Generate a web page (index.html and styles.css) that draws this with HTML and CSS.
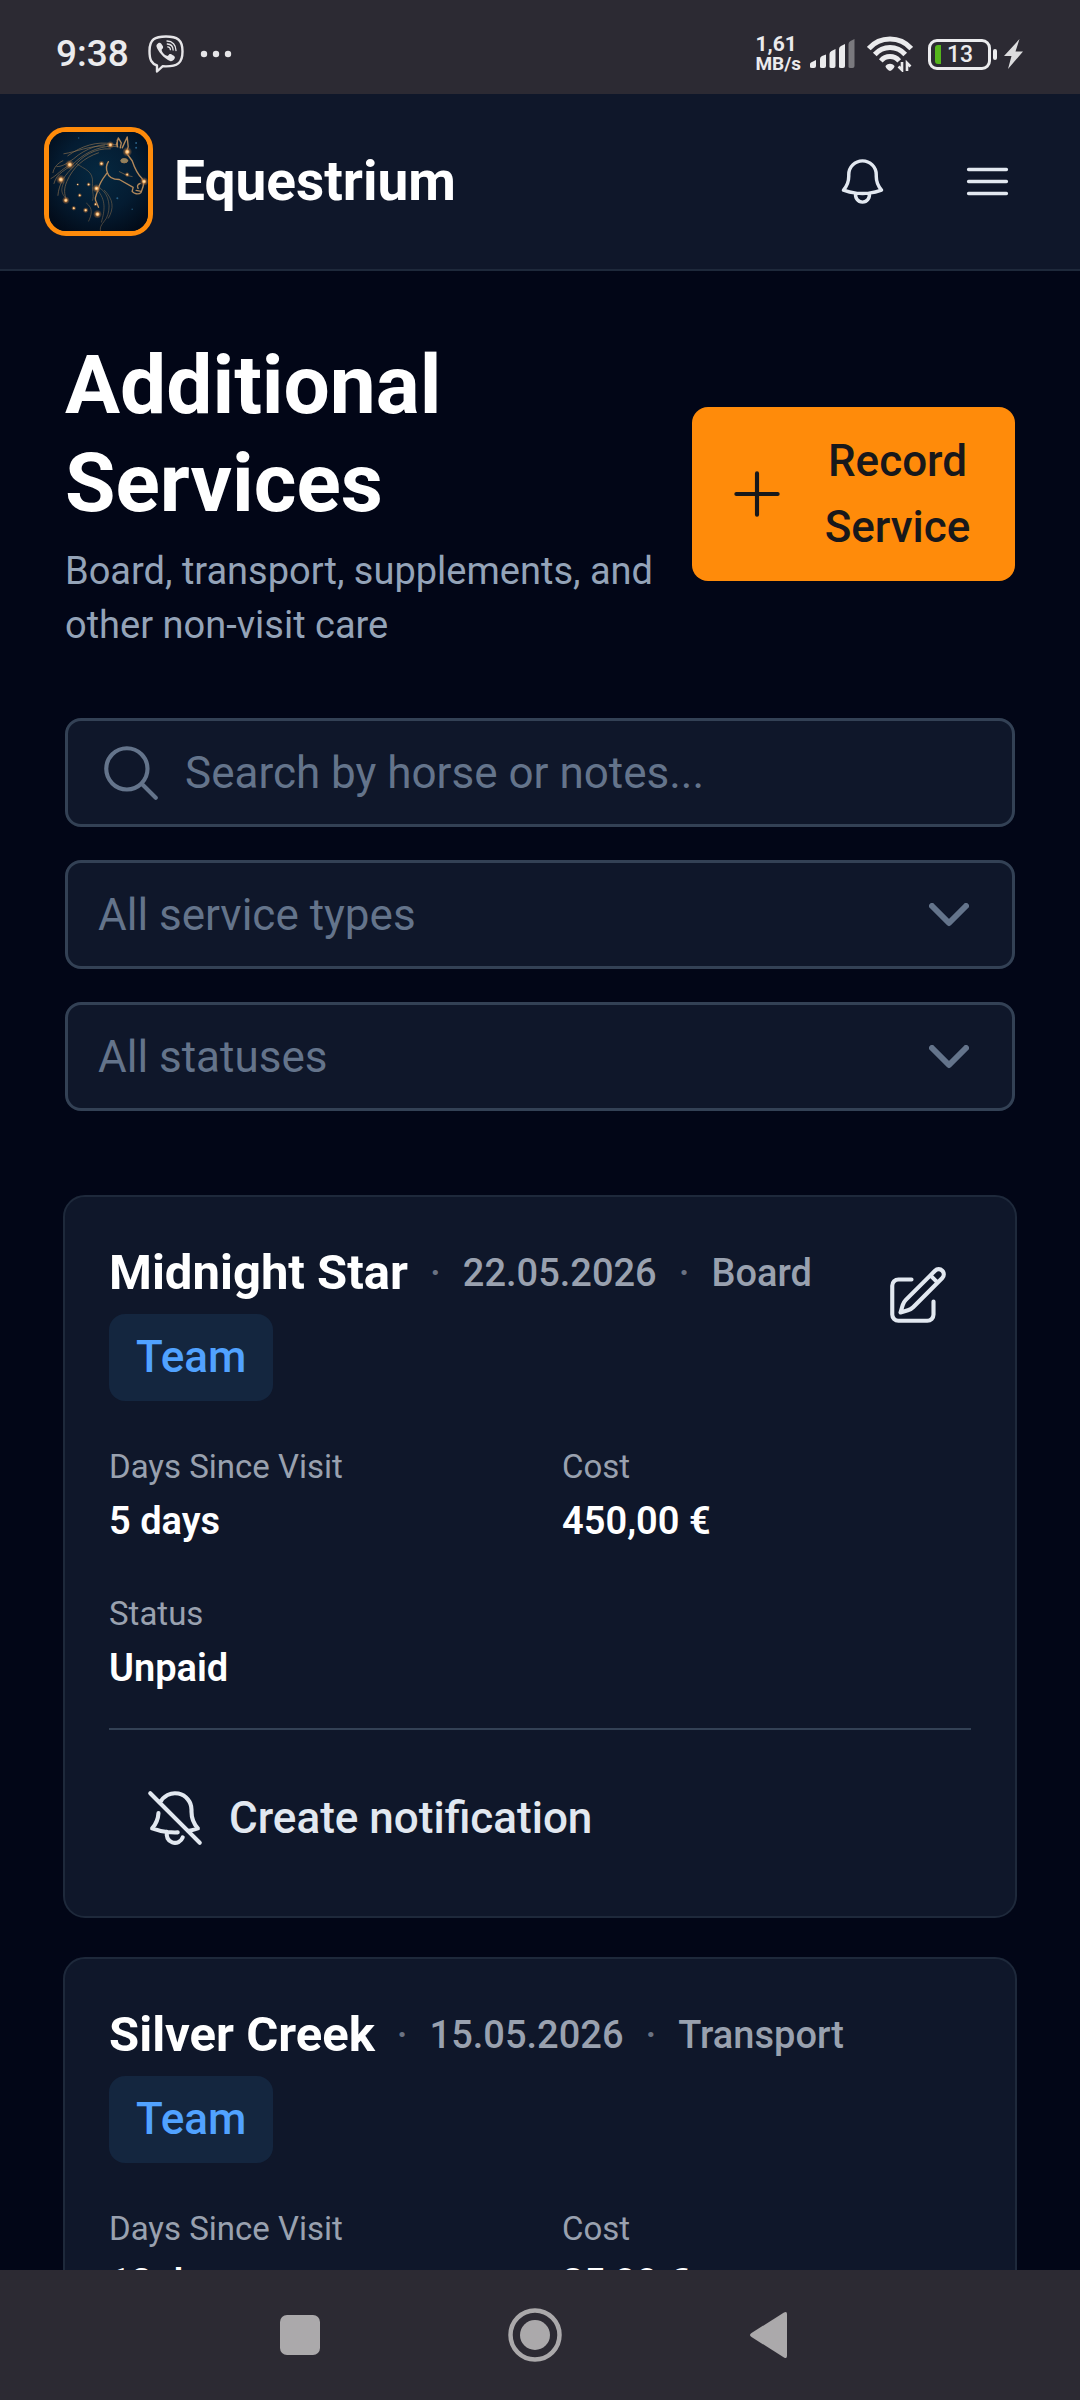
FILE: index.html
```html
<!DOCTYPE html>
<html lang="en">
<head>
<meta charset="utf-8">
<meta name="viewport" content="width=device-width, initial-scale=1">
<title>Equestrium – Additional Services</title>
<link rel="stylesheet" href="styles.css">
</head>
<body>
<div class="screen">
  <div class="status-bar">
    <div class="status-left">
      <span class="clock">9:38</span>
      <svg class="viber" width="36" height="38" viewBox="0 0 36 38" fill="none" stroke="#e6e5e8" stroke-linecap="round" stroke-linejoin="round">
        <path stroke-width="2.4" d="M18 1.500C7 1.500 1.500 4 1.500 16c0 9 2 12.500 7.500 14.500V36.500l5.500-5.200c1 .1 2 .1 3.500.1 11 0 16.500-3 16.500-15S29 1.500 18 1.500z"/>
        <path fill="#e6e5e8" stroke="none" d="M10.500 8c1.800-1.200 3.200 1.100 4.300 3 .9 1.700-.1 2.500-.9 3.200-1 1 1.500 5.300 5 6.600 1 .4 1.500-.6 2.200-1.400 1.200-1.200 5.200 1.500 5.700 2.700.6 1.700-2.300 4.600-4.200 4.100C15.500 23.500 9.500 15.500 8.500 11.500c-.4-1.500.8-2.800 2-3.500z"/>
        <path stroke-width="1.300" d="M19 6c5.500 0 9 4 9 9.500M19.300 9c3.500.2 5.700 2.500 5.800 6M19.700 11.900c1.700.1 2.600 1.100 2.700 2.800"/>
      </svg>
      <svg width="32" height="8" viewBox="0 0 32 8" fill="#e6e5e8"><circle cx="4" cy="4" r="3.200"/><circle cx="16" cy="4" r="3.200"/><circle cx="28" cy="4" r="3.200"/></svg>
    </div>
    <div class="status-right">
      <div class="net-speed"><span class="net-value">1,61</span><span class="net-unit">MB/s</span></div>
      <svg width="45" height="30" viewBox="0 0 45 30" fill="#ebebed"><path d="M0 28v-3q0-1 1-1.500l5-2.500v6q0 2-2 2H2q-2 0-2-1z"/><path d="M10 28V20q0-2 2-3l4-1.500V27q0 2-2 2h-2q-2 0-2-1z"/><path d="M19.500 28V15q0-2 2-3l4-2V27q0 2-2 2h-2q-2 0-2-1z"/><path d="M29 28V10q0-2 2-3l4-2V27q0 2-2 2h-2q-2 0-2-1z"/><path fill="#7a797e" d="M38.500 28V5q0-2 2-3l4-2V27q0 2-2 2h-2q-2 0-2-1z"/></svg>
      <svg class="wifi" width="46" height="36" viewBox="0 0 46 36" fill="none" stroke="#ebebed" stroke-width="5"><path d="M1.800 12.500C13-.2 33-.2 44.200 12.500"/><path d="M7.800 18.500c8.300-9.200 22.100-9.200 30.400 0"/><path d="M13.800 24.800c5-5.600 13.400-5.600 18.400 0"/><path fill="#ebebed" stroke="none" d="M18.500 30c2.500-3 6.500-3 9 0 0 2-3.500 5-4.500 5s-4.500-3-4.500-5z"/><path stroke-width="2.600" d="M35 26v8l-3.500-3.500M40 35v-8l3.500 3.500"/></svg>
      <div class="battery"><span class="battery-level"></span><span class="battery-text">13</span></div>
      <svg class="bolt" width="19" height="30" viewBox="0 0 19 30" fill="#dcdcde"><path d="M15.500 0 0 17h7.500L4 30 19 12.500h-7.500z"/></svg>
    </div>
  </div>

  <header class="app-header">
    <a class="brand" href="#">
      <svg class="logo" viewBox="0 0 100 100">
        <defs>
          <radialGradient id="night" cx=".5" cy=".42" r=".7"><stop offset="0" stop-color="#052840"/><stop offset=".55" stop-color="#041c32"/><stop offset="1" stop-color="#020a17"/></radialGradient>
          <radialGradient id="glow"><stop offset="0" stop-color="#fff0cd"/><stop offset=".3" stop-color="#f5b56b"/><stop offset=".55" stop-color="#b0703a" stop-opacity=".55"/><stop offset="1" stop-color="#b0703a" stop-opacity="0"/></radialGradient>
        </defs>
        <rect width="100" height="100" fill="url(#night)"/>
        <g fill="none" stroke="#9c7a52" stroke-linecap="round" stroke-linejoin="round" stroke-width="1">
          <path opacity=".6" d="M68 13C54 10 36 17 25 27c-6 4-11 8-17 8M70 15C55 12 38 20 28 29 18 39 8 40 5 52M64 12C48 9 33 14 19 24M62 17C46 16 33 25 26 34 16 43 10 52 9 64M56 14C40 14 28 20 15 22M50 21c-15 5-26 15-32 29-3 7-3 13 0 19M14 29c-6 3-9 7-10 12M20 34C12 38 8 44 2 47"/>
          <path opacity=".6" stroke-width=".8" d="M28 32c8 6 17 7 16 20-1 9 2 11 0 17M52 57c9 6 11 20 6 30-4 6-7 8-6 13M50 60c9 11 5 23 3 31M56 59c9 9 10 18 4 28M38 72c7 5 5 12 2 18M15 51c-4 8-2 12 3 17"/>
          <path stroke="#b0875a" stroke-width="1.400" d="m68 13 2-7 3 5-1 5M74 16l5-11 1 10-2 6 6 8c2 6 4 12 10 18 3 5 1 8-1 14-3 3-7 1-9-1l1-4-14-8C63 48 60 45 59 41c-2-5-1-8 1-11M59 41c-3 4-8 10-9 16-2 7-4 8-3 12l3 7M69 8v7M88 59l5 1M92 52c-3 1-3 3-2 5"/>
          <ellipse cx="76" cy="29" rx="3.500" ry="2.200" fill="#8f8260"/>
          <path stroke-width=".6" d="M71 40l8 4 5 1"/>
        </g>
        <g fill="url(#glow)"><circle cx="21" cy="33" r="5"/><circle cx="12" cy="48" r="5"/><circle cx="17" cy="69" r="4"/><circle cx="62" cy="13" r="4"/><circle cx="79" cy="20" r="5"/><circle cx="96" cy="50" r="4.500"/><circle cx="48" cy="57" r="4.500"/><circle cx="49" cy="83" r="4.500"/><circle cx="53" cy="32" r="3.200"/><circle cx="79" cy="43" r="2.600"/><circle cx="25" cy="77" r="2.600"/><circle cx="37" cy="79" r="3"/><circle cx="40" cy="53" r="2.400"/><circle cx="31" cy="64" r="2.400"/><circle cx="47" cy="73" r="2.200"/><circle cx="29" cy="53" r="1.600"/></g>
        <g fill="#285f85"><circle cx="88" cy="11" r="1"/><circle cx="88" cy="16" r="1"/><circle cx="69" cy="67" r="1"/><circle cx="30" cy="6" r=".7"/><circle cx="84" cy="78" r=".7"/></g>
      </svg>
      <span class="brand-name">Equestrium</span>
    </a>
    <div class="header-actions">
      <button class="icon-button" type="button" aria-label="Notifications">
        <svg class="icon" viewBox="0 0 24 24"><path d="M14.857 17.082a23.848 23.848 0 0 0 5.454-1.310A8.967 8.967 0 0 1 18 9.750V9A6 6 0 0 0 6 9v.750a8.967 8.967 0 0 1-2.312 6.022c1.733.640 3.560 1.085 5.455 1.310m5.714 0a24.255 24.255 0 0 1-5.714 0m5.714 0a3 3 0 1 1-5.714 0"/></svg>
      </button>
      <button class="icon-button" type="button" aria-label="Menu">
        <svg class="icon" viewBox="0 0 24 24"><path d="M3.750 6.750h16.500M3.750 12h16.500m-16.500 5.250h16.500"/></svg>
      </button>
    </div>
  </header>

  <main class="content">
    <div class="page-head">
      <div class="page-title">
        <h1>Additional Services</h1>
        <p>Board, transport, supplements, and other non-visit care</p>
      </div>
      <button class="record-button" type="button">
        <svg class="icon" viewBox="0 0 24 24"><path d="M12 4.500v15m7.500-7.500h-15"/></svg>
        <span>Record Service</span>
      </button>
    </div>

    <form class="filters">
      <label class="field">
        <svg class="icon search-icon" viewBox="0 0 24 24"><path d="m21 21-5.197-5.197m0 0A7.500 7.500 0 1 0 5.196 5.196a7.500 7.500 0 0 0 10.607 10.607Z"/></svg>
        <input type="text" placeholder="Search by horse or notes..." aria-label="Search">
      </label>
      <label class="field">
        <select aria-label="Service type"><option>All service types</option></select>
        <svg class="chevron" viewBox="0 0 40 24"><path d="m3 3 17 17L37 3"/></svg>
      </label>
      <label class="field">
        <select aria-label="Status"><option>All statuses</option></select>
        <svg class="chevron" viewBox="0 0 40 24"><path d="m3 3 17 17L37 3"/></svg>
      </label>
    </form>

    <div class="cards">
      <article class="card">
        <div class="card-head">
          <div class="card-title">
            <h2>Midnight Star</h2><span class="dot">·</span><span class="meta">22.05.2026</span><span class="dot">·</span><span class="meta">Board</span>
            <span class="badge">Team</span>
          </div>
          <button class="edit-button" type="button" aria-label="Edit">
            <svg class="icon" viewBox="0 0 24 24"><path d="m16.862 4.487 1.687-1.688a1.875 1.875 0 1 1 2.652 2.652L10.582 16.070a4.500 4.500 0 0 1-1.897 1.130L6 18l.8-2.685a4.500 4.500 0 0 1 1.130-1.897l8.932-8.931Zm0 0L19.500 7.125M18 14v4.750A2.250 2.250 0 0 1 15.750 21H5.250A2.250 2.250 0 0 1 3 18.750V8.250A2.250 2.250 0 0 1 5.250 6H10"/></svg>
          </button>
        </div>
        <dl class="facts">
          <div><dt>Days Since Visit</dt><dd>5 days</dd></div>
          <div><dt>Cost</dt><dd>450,00 €</dd></div>
          <div><dt>Status</dt><dd>Unpaid</dd></div>
        </dl>
        <div class="card-foot">
          <button class="notify-button" type="button">
            <svg class="icon" viewBox="0 0 24 24"><path d="M9.143 17.082a24.248 24.248 0 0 0 3.844.148m-3.844-.148a23.856 23.856 0 0 1-5.455-1.310 8.964 8.964 0 0 0 2.300-5.542m3.155 6.852a3 3 0 0 0 5.667 1.970m1.965-2.277L21 21m-4.225-4.225a23.810 23.810 0 0 0 3.536-1.003A8.967 8.967 0 0 1 18 9.750V9A6 6 0 0 0 6.530 6.530m10.245 10.245L6.530 6.530M3 3l3.530 3.530"/></svg>
            <span>Create notification</span>
          </button>
        </div>
      </article>
      <article class="card">
        <div class="card-head">
          <div class="card-title">
            <h2>Silver Creek</h2><span class="dot">·</span><span class="meta">15.05.2026</span><span class="dot">·</span><span class="meta">Transport</span>
            <span class="badge">Team</span>
          </div>
        </div>
        <dl class="facts">
          <div><dt>Days Since Visit</dt><dd>12 days</dd></div>
          <div><dt>Cost</dt><dd>85,00 €</dd></div>
        </dl>
      </article>
    </div>
  </main>

  <nav class="system-nav">
    <button type="button" aria-label="Recent apps"><svg width="54" height="54" viewBox="0 0 54 54"><rect x="7" y="7" width="40" height="40" rx="7" fill="#aba9ab"/></svg></button>
    <button type="button" aria-label="Home"><svg width="54" height="54" viewBox="0 0 54 54"><circle cx="27" cy="27" r="24.500" fill="none" stroke="#aba9ab" stroke-width="4.500"/><circle cx="27" cy="27" r="15" fill="#aba9ab"/></svg></button>
    <button type="button" aria-label="Back"><svg width="54" height="54" viewBox="0 0 54 54"><path d="M8.500 25 41 4.500q3-1.500 3 1.500v42q0 3-3 1.500L8.500 29q-3-2 0-4z" fill="#aba9ab"/></svg></button>
  </nav>
</div>
</body>
</html>
```

FILE: styles.css
```css
* {
  box-sizing: border-box;
}

body {
  margin: 0;
  background: #020617;
  color: #fff;
  font-family: Roboto, "Noto Sans", sans-serif;
}

h1, h2, p, dl, dd {
  margin: 0;
}

button, input, select {
  margin: 0;
  padding: 0;
  border: 0;
  background: none;
  color: inherit;
  font: inherit;
}

svg {
  display: block;
  flex: none;
}

.screen {
  display: flex;
  flex-direction: column;
  height: 100vh;
  overflow: hidden;
}

/* Device status bar */
.status-bar {
  display: flex;
  flex: none;
  justify-content: space-between;
  align-items: center;
  height: 94px;
  padding: 14px 57px 0 56px;
  background: #2c2a33;
  color: #ebebed;
}

.status-left,
.status-right {
  display: flex;
  align-items: center;
}

.clock {
  margin-right: 19px;
  font-size: 37px;
  line-height: 44px;
  font-weight: 500;
}

.viber {
  margin-right: 16px;
}

.net-speed {
  display: flex;
  flex-direction: column;
  margin-right: 9px;
  line-height: 19px;
  font-weight: 700;
}

.net-value {
  font-size: 21px;
}

.net-unit {
  font-size: 19px;
}

.wifi {
  margin: 0 15px 0 12px;
}

.battery {
  position: relative;
  display: flex;
  align-items: center;
  width: 63px;
  height: 31px;
  padding: 0 4px;
  border: 3px solid #ebebed;
  border-radius: 9px;
}

.battery::after {
  content: "";
  position: absolute;
  right: -9px;
  top: 7px;
  width: 4px;
  height: 11px;
  border-radius: 2px;
  background: #ebebed;
}

.battery-level {
  width: 6px;
  height: 19px;
  border-radius: 3px 0 0 3px;
  background: #55b51c;
}

.battery-text {
  margin-left: 6px;
  font-size: 23px;
  line-height: 25px;
  font-weight: 500;
}

.bolt {
  margin-left: 13px;
}

/* App header */
.app-header {
  display: flex;
  flex: none;
  justify-content: space-between;
  align-items: center;
  padding: 33px 38px 33px 44px;
  border-bottom: 2px solid #1e293b;
  background: #0f172a;
}

.brand {
  display: flex;
  align-items: center;
  gap: 21px;
  color: #fff;
  text-decoration: none;
}

.logo {
  width: 109px;
  height: 109px;
  border: 5px solid #ff8b0a;
  border-radius: 22px;
}

.brand-name {
  font-size: 55px;
  line-height: 77px;
  font-weight: 700;
}

.header-actions {
  display: flex;
  gap: 16px;
}

.icon-button {
  display: grid;
  place-items: center;
  width: 109px;
  height: 109px;
}

.icon {
  width: 66px;
  height: 66px;
  fill: none;
  stroke: #e2e8f0;
  stroke-width: 1.5;
  stroke-linecap: round;
  stroke-linejoin: round;
}

.icon-button .icon {
  width: 55px;
  height: 55px;
}

/* Page */
.content {
  flex: 1;
  min-height: 0;
  overflow: hidden;
  padding: 65px 63px 0;
}

.page-head {
  display: flex;
  justify-content: space-between;
  align-items: center;
  gap: 24px;
  padding: 0 2px;
}

.page-title {
  flex: 1;
}

.page-title h1 {
  font-size: 82px;
  line-height: 98px;
  font-weight: 700;
}

.page-title p {
  margin-top: 12px;
  color: #94a3b8;
  font-size: 38px;
  line-height: 54px;
}

.record-button {
  display: flex;
  flex: none;
  align-items: center;
  gap: 22px;
  width: 323px;
  padding: 21px 32px;
  border-radius: 16px;
  background: #ff8b0a;
  color: #18181b;
  font-size: 44px;
  line-height: 66px;
  font-weight: 500;
}

.record-button span {
  flex: 1;
  text-align: center;
}

.record-button .icon {
  stroke: #18181b;
}

.filters {
  display: flex;
  flex-direction: column;
  gap: 33px;
  margin-top: 66px;
  padding: 0 2px;
}

.field {
  display: flex;
  align-items: center;
  height: 109px;
  padding: 0 43px 0 30px;
  border: 3px solid #334155;
  border-radius: 16px;
  background: #0f172a;
}

.field input,
.field select {
  flex: 1;
  min-width: 0;
  height: 66px;
  appearance: none;
  outline: 0;
  color: #64748b;
  font-size: 44px;
  line-height: 66px;
}

.field input::placeholder {
  color: #64748b;
  opacity: 1;
}

.search-icon {
  margin-right: 21px;
  stroke: #64748b;
}

.chevron {
  width: 40px;
  height: 24px;
  fill: none;
  stroke: #64748b;
  stroke-width: 6;
  stroke-linecap: round;
  stroke-linejoin: round;
}

/* Service cards */
.cards {
  display: flex;
  flex-direction: column;
  gap: 39px;
  margin-top: 84px;
}

.card {
  padding: 44px 44px 43px;
  border: 2px solid #1e293b;
  border-radius: 22px;
  background: #0f172a;
}

.card-head {
  display: flex;
  justify-content: space-between;
  align-items: flex-start;
  gap: 22px;
}

.card-title {
  display: flex;
  flex-wrap: wrap;
  align-items: center;
  column-gap: 22px;
  row-gap: 9px;
}

.card-title h2 {
  font-size: 49px;
  line-height: 64px;
  font-weight: 700;
}

.dot,
.meta {
  color: #99a1af;
  font-size: 38px;
  line-height: 54px;
  font-weight: 500;
}

.dot {
  color: #6a7282;
}

.badge {
  padding: 11px 27px;
  border-radius: 16px;
  background: #14263f;
  color: #51a2ff;
  font-size: 44px;
  line-height: 65px;
  font-weight: 500;
}

.edit-button {
  display: grid;
  flex: none;
  place-items: center;
  width: 109px;
  height: 109px;
}

.facts {
  display: grid;
  grid-template-columns: 1fr 1fr;
  gap: 43px 44px;
  margin-top: 44px;
}

.facts dt {
  color: #99a1af;
  font-size: 33px;
  line-height: 44px;
}

.facts dd {
  margin-top: 5px;
  font-size: 38px;
  line-height: 55px;
  font-weight: 600;
}

.card-foot {
  margin-top: 32px;
  padding-top: 33px;
  border-top: 2px solid #334155;
}

.notify-button {
  display: flex;
  align-items: center;
  gap: 21px;
  padding: 22px 33px;
  color: #e2e8f0;
  font-size: 44px;
  line-height: 66px;
  font-weight: 500;
}

/* Device navigation bar */
.system-nav {
  display: flex;
  flex: none;
  justify-content: center;
  align-items: center;
  gap: 181px;
  height: 130px;
  padding-right: 10px;
  background: #2c2a33;
}
```
